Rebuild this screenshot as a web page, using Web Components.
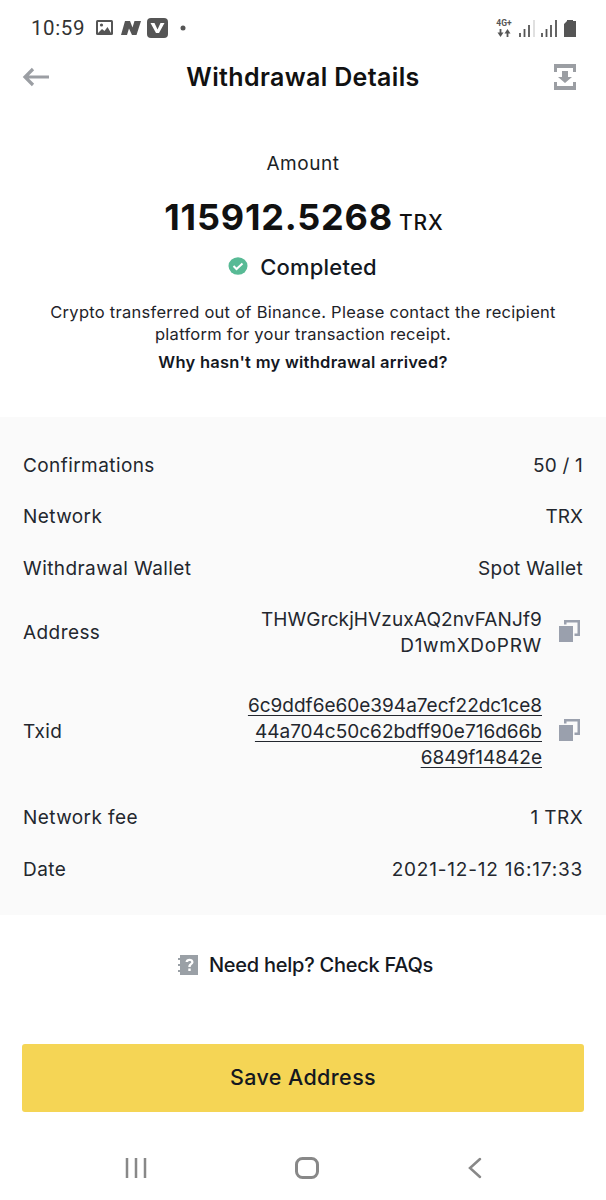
<!DOCTYPE html>
<html><head><meta charset="utf-8"><style>
html,body{margin:0;padding:0;background:#fff}
body{width:606px;height:1200px;overflow:hidden;font-family:Inter,"Noto Sans",sans-serif;color:#14181f}
</style></head><body>
<app-screen></app-screen>
<template id="t-status"><style>
:host{display:flex;align-items:center;height:56px;padding:0 30px 0 31px;box-sizing:border-box;color:#333}
.t{font:400 20.500px/1 Roboto,sans-serif;letter-spacing:.6px;margin-right:10px}
.l{display:flex;align-items:center;gap:8px}
.s{flex:1}
.r{display:flex;align-items:center;gap:6px}
svg{display:block}
.net{font:700 8.500px/1 Roboto,sans-serif;color:#555;text-align:center;width:18px}
</style><span class="t">10:59</span><div class="l">
<svg width="18" height="16" viewBox="0 0 18 16"><rect x="1" y="0" width="17" height="15" rx="1.500" fill="#555"/><rect x="3" y="2" width="13" height="11" fill="#fff"/><circle cx="6.500" cy="5" r="1.600" fill="#555"/><path d="M3 13l4-4 2.500 2 3-4 3.500 6z" fill="#555"/></svg>
<svg width="20" height="16" viewBox="0 0 20 16"><path d="M0 15L4 1h5l2.500 6.500L13.500 1H20l-4.500 14h-4.500L8 8.500 6 15z" fill="#555"/></svg>
<svg width="21" height="20" viewBox="0 0 21 20" style="margin-left:-2px"><rect width="21" height="20" rx="4" fill="#555"/><path d="M3.500 5h4l3 6.500L13.500 5h4l-5.500 10h-3z" fill="#fff"/></svg>
<svg width="6" height="6" viewBox="0 0 6 6" style="margin-left:4px"><circle cx="3" cy="3" r="2.500" fill="#555"/></svg>
</div><div class="s"></div><div class="r">
<div class="net">4G+<svg width="14" height="8" viewBox="0 0 14 8" style="margin:1px auto 0"><path d="M3.500 0v4" stroke="#555" stroke-width="1.800"/><path d="M0.500 3.500h6L3.500 8z" fill="#555"/><path d="M10.500 8V4" stroke="#555" stroke-width="1.800"/><path d="M7.500 4.500h6L10.500 0z" fill="#555"/></svg></div>
<svg width="16" height="17" viewBox="0 0 16 17"><path d="M1 13v4M5.500 9v8M10 5v12" stroke="#555" stroke-width="1.800"/><path d="M15 0v17" stroke="#ccc" stroke-width="1.200"/></svg>
<svg width="16" height="17" viewBox="0 0 16 17"><path d="M1 13v4M5.500 9v8M10 5v12M15 0v17" stroke="#555" stroke-width="1.800"/></svg>
<svg width="12" height="17" viewBox="0 0 12 17" style="margin-left:1px"><path d="M3 1V0h6v1h3v16H0V4z" fill="#555"/></svg>
</div></template>
<template id="t-nav"><style>
:host{display:flex;align-items:center;justify-content:space-between;height:42px;padding:0 30px 0 22px}
h1{margin:0;font:600 25px/1 Inter,sans-serif;letter-spacing:.35px;color:#111;position:relative;left:1px}
svg{display:block}
</style><svg width="28" height="20" viewBox="0 0 28 20"><path d="M27 10H3M11 2l-8 8 8 8" fill="none" stroke="#9b9ea3" stroke-width="3.200"/></svg>
<h1>Withdrawal Details</h1>
<svg width="22" height="26" viewBox="0 0 22 26"><path d="M0 0h22v8h-3V4H3v4H0zM0 26h22v-8h-3v4H3v-4H0z" fill="#9b9ea3"/><path d="M8 7h6v6h4l-7 6-7-6h4z" fill="#9b9ea3"/></svg></template>
<template id="t-summary"><style>
:host{display:block;text-align:center;padding-top:54px}
.a{font:400 19px/24px Inter,sans-serif;color:#1b1f26;letter-spacing:.55px}
.v{display:flex;justify-content:center;align-items:baseline;gap:6px;padding-left:2px;margin-top:19px;font-family:Inter,sans-serif;font-weight:700;font-size:36px;line-height:44px;color:#111;letter-spacing:.8px}
.v span{font-weight:500;font-size:21px;letter-spacing:.9px}
.st{display:flex;justify-content:center;align-items:center;gap:12px;margin-top:5px;font:500 22px/34px Inter,sans-serif;letter-spacing:.2px;color:#14181f;padding-right:1px}
.st svg{position:relative;top:-1px}
p{margin:17px 0 0;font:400 16.500px/22px Inter,sans-serif;letter-spacing:.27px;color:#1e2329}
b{display:block;margin-top:6px;font:600 16.500px/22px Inter,sans-serif;letter-spacing:.27px;color:#14181f}
</style><div class="a">Amount</div><div class="v">115912.5268<span>TRX</span></div>
<div class="st"><svg width="20" height="18" viewBox="0 0 20 18"><ellipse cx="10" cy="9" rx="9.500" ry="8.800" fill="#58ba95"/><path d="M5.500 9l3 3 6-5.500" fill="none" stroke="#fff" stroke-width="2"/></svg>Completed</div>
<p>Crypto transferred out of Binance. Please contact the recipient<br>platform for your transaction receipt.</p><b>Why hasn't my withdrawal arrived?</b></template>
<template id="t-panel"><style>
:host{display:block;background:#fafafa;padding:23px 23px 19px;margin-top:44px}
</style><slot></slot></template>
<template id="t-row"><style>
:host{display:flex;justify-content:space-between;align-items:center;min-height:51.500px;font:400 19px/26px Inter,sans-serif;color:#23272e}
.k{letter-spacing:.42px}
.v{display:flex;align-items:center;gap:17px;text-align:right;letter-spacing:var(--ls,0)}
.c{display:none;margin-top:-3px}
:host([copy]) .c{display:block}
:host([link]) .t{text-decoration:underline;text-underline-offset:3px;text-decoration-thickness:1px}
.t{white-space:pre-line}
:host([copy]) .v{margin-right:3px}
:host([tall]){min-height:76px}
svg{flex:none}
</style><span class="k"><slot name="k"></slot></span><div class="v"><span class="t"><slot></slot></span>
<svg class="c" width="21" height="22" viewBox="0 0 21 22"><path d="M0 6h14v16H0z" fill="#9aa0ad"/><path d="M5 4.500V0h16v16h-5.500v-2.500H18.500V2.500H7.500v2z" fill="#9aa0ad"/></svg></div></template>
<template id="t-help"><style>
:host{display:flex;justify-content:center;align-items:center;gap:11px;height:60px;margin-top:20px;padding-left:5px;font:500 20px/1 Inter,sans-serif;letter-spacing:-.25px;color:#14181f}
svg{display:block}
</style><svg width="20" height="20" viewBox="0 0 20 20"><path d="M2 0h18v20H2z" fill="#9aa0a6"/><path d="M0 3h4v2H0zM0 9h4v2H0zM0 15h4v2H0z" fill="#9aa0a6"/><path d="M7.500 7c0-4.500 8-4.500 8 0 0 2.500-2.800 2.500-2.800 5h-2.400c0-3.500 3-3.500 3-5 0-1.500-3.300-1.500-3.300 0zM10.300 13.500h2.400v2.500h-2.400z" fill="#fff"/></svg><slot></slot></template>
<template id="t-btn"><style>
:host{display:flex;align-items:center;justify-content:center;height:68px;margin:49px 22px 0;background:#f5d555;border-radius:3px;font:500 21.500px/1 Inter,sans-serif;letter-spacing:.4px;color:#14181f}
</style><slot></slot></template>
<template id="t-sys"><style>
:host{display:flex;justify-content:space-between;align-items:center;height:44px;margin-top:34px;padding:0 124px 0 125px}
svg{display:block}
</style><svg width="22" height="20" viewBox="0 0 22 20"><path d="M2 0v20M11 0v20M20 0v20" stroke="#888" stroke-width="2.500" stroke-linecap="round"/></svg>
<svg width="24" height="22" viewBox="0 0 24 22"><rect x="1.500" y="1.500" width="21" height="19" rx="6" fill="none" stroke="#888" stroke-width="3"/></svg>
<svg width="15" height="22" viewBox="0 0 15 22"><path d="M13 2L3 11l10 9" fill="none" stroke="#888" stroke-width="2.500" stroke-linecap="round"/></svg></template>
<script>
const def=(n,t)=>customElements.define(n,class extends HTMLElement{constructor(){super();this.attachShadow({mode:'open'}).appendChild(document.getElementById(t).content.cloneNode(true))}});
def('status-bar','t-status');def('nav-head','t-nav');def('amount-summary','t-summary');def('detail-panel','t-panel');def('detail-row','t-row');def('help-link','t-help');def('save-button','t-btn');def('system-nav','t-sys');
customElements.define('app-screen',class extends HTMLElement{constructor(){super();const s=this.attachShadow({mode:'open'});s.innerHTML=`<style>:host{display:block}</style>
<status-bar></status-bar><nav-head></nav-head><amount-summary></amount-summary>
<detail-panel>
<detail-row style="--ls:.2px"><span slot="k">Confirmations</span>50 / 1</detail-row>
<detail-row><span slot="k">Network</span>TRX</detail-row>
<detail-row style="--ls:.3px"><span slot="k">Withdrawal Wallet</span>Spot Wallet</detail-row>
<detail-row copy tall style="--ls:.12px"><span slot="k">Address</span>THWGrckjHVzuxAQ2nvFANJf9
<span style="letter-spacing:.7px">D1wmXDoPRW</span></detail-row>
<detail-row copy link tall style="min-height:122px"><span slot="k">Txid</span>6c9ddf6e60e394a7ecf22dc1ce8
44a704c50c62bdff90e716d66b
6849f14842e</detail-row>
<detail-row style="--ls:.4px"><span slot="k">Network fee</span>1 TRX</detail-row>
<detail-row style="--ls:.8px"><span slot="k">Date</span>2021-12-12 16:17:33</detail-row>
</detail-panel>
<help-link>Need help? Check FAQs</help-link>
<save-button>Save Address</save-button>
<system-nav></system-nav>`}});
</script></body></html>
